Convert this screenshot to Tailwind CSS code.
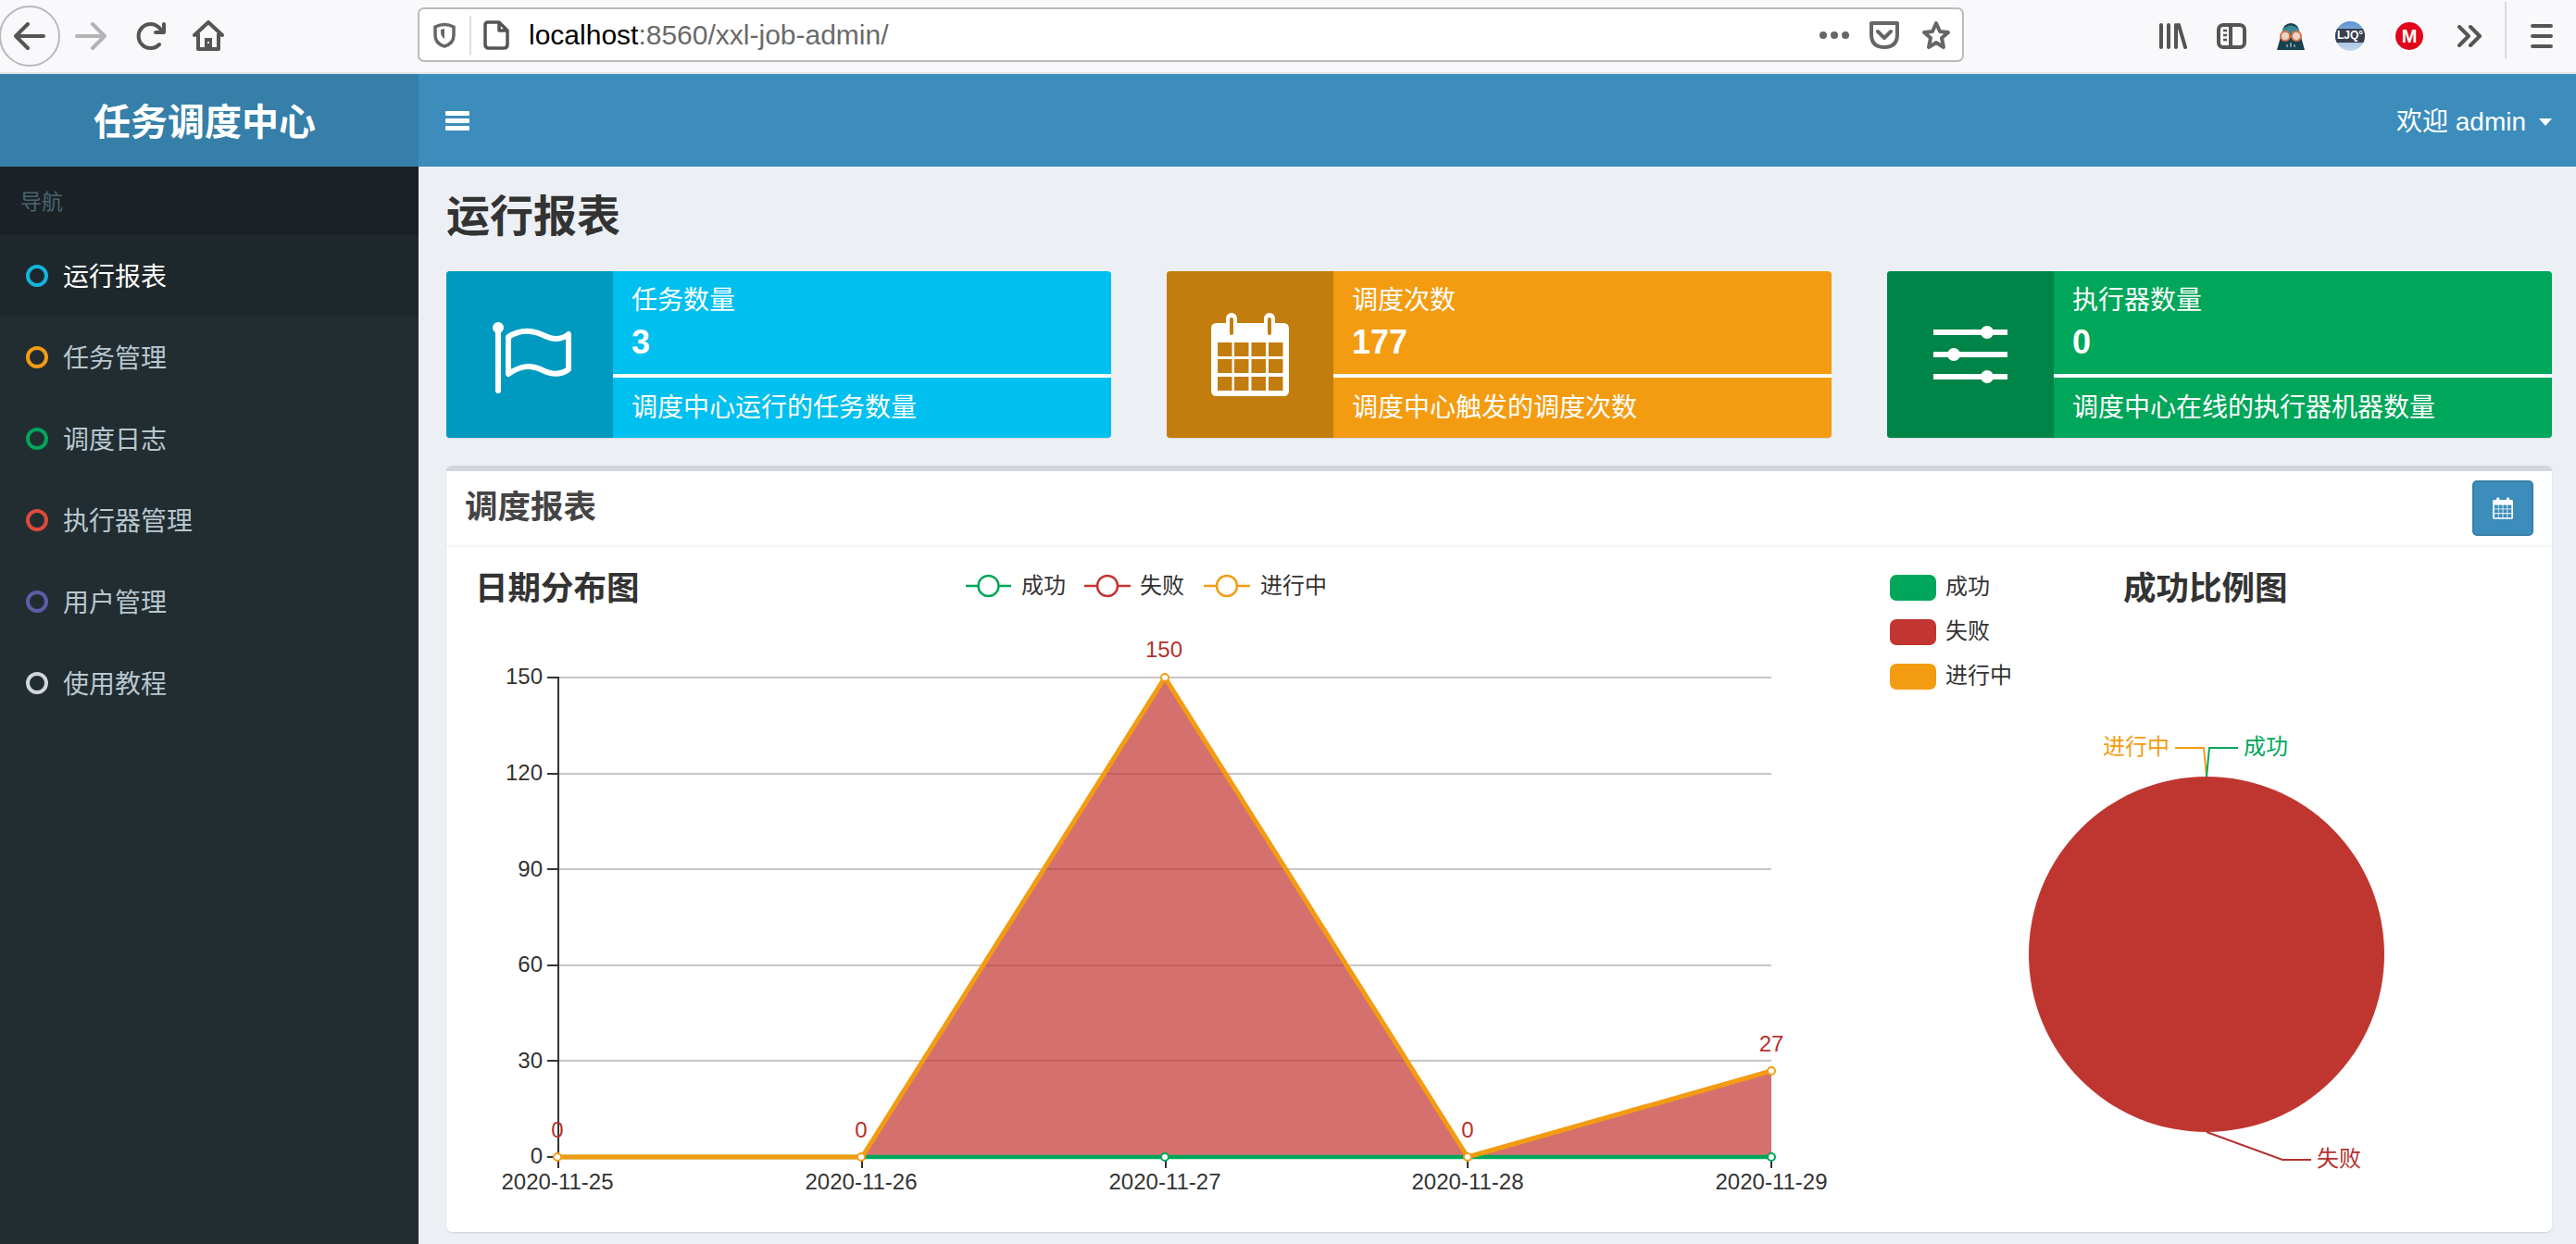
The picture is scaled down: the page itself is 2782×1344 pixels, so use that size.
<!DOCTYPE html>
<html lang="en">
<head>
  <meta charset="UTF-8">
  <title>任务调度中心</title>
  <script src="https://cdn.jsdelivr.net/npm/@tailwindcss/browser@4"></script>
</head>
<body class="h-screen w-screen overflow-hidden bg-[#ecf0f5] text-[#333] font-['Liberation_Sans','Noto_Sans_CJK_SC',sans-serif]">

  <!-- browser toolbar -->
  <div class="h-[80px] flex items-start bg-[#f9f9fb] border-b-2 border-[#e1e5e9]">
    <div class="h-[78px] w-[451px] shrink-0 flex items-center">
      <div class="ml-[-1px] w-[66px] h-[66px] shrink-0 rounded-full border-2 border-[#b9b9bb] flex items-center justify-center">
        <svg width="34" height="30" viewBox="0 0 34 30" fill="none" stroke="#555" stroke-width="4" stroke-linecap="round" stroke-linejoin="round"><path d="M2 15H32M15 2L2 15L15 28"/></svg>
      </div>
      <svg class="ml-[16px]" width="34" height="30" viewBox="0 0 34 30" fill="none" stroke="#b3b3b5" stroke-width="4" stroke-linecap="round" stroke-linejoin="round"><path d="M32 15H2M19 2L32 15L19 28"/></svg>
      <svg class="ml-[32px]" width="32" height="30" viewBox="0 0 32 30" fill="none" stroke="#555" stroke-width="4" stroke-linecap="round" stroke-linejoin="round"><path d="M25 24A13 13 0 1 1 25 6L29 11M30 2V11H21"/></svg>
      <svg class="ml-[29px]" width="34" height="34" viewBox="0 0 34 34" fill="none" stroke="#555" stroke-width="4" stroke-linejoin="round" stroke-linecap="round"><path d="M2 16L17 2L32 16M6 15V31H28V15"/><rect x="13" y="19" width="8" height="12" fill="#555" stroke="none"/><rect x="16" y="23" width="2" height="2" fill="#f9f9fb" stroke="none"/></svg>
    </div>

    <div class="mt-[8px] h-[59px] w-[1670px] shrink-0 flex items-center bg-white border-2 border-[#bbb] rounded-[7px]">
      <svg class="ml-[15px]" width="24" height="28" viewBox="0 0 24 28" fill="none" stroke="#666" stroke-width="3.5"><path d="M2 5Q12 0 22 5V14Q22 23 12 26Q2 23 2 14Z"/><path d="M8 8L12 7V18Q8 15 8 11Z" fill="#666" stroke="none"/></svg>
      <div class="ml-[15px] w-[2px] h-[42px] bg-[#dcdcdc]"></div>
      <svg class="ml-[13px]" width="28" height="32" viewBox="0 0 28 32" fill="none" stroke="#555" stroke-width="3.5" stroke-linejoin="round"><path d="M5 2H17L26 11V26Q26 30 22 30H6Q2 30 2 26V5Q2 2 5 2ZM17 2V11H26"/></svg>
      <div class="ml-[21px] text-[30px] leading-none"><span class="text-black">localhost</span><span class="text-[#6a6a6a]">:8560/xxl-job-admin/</span></div>
      <div class="ml-auto flex items-center">
        <svg width="32" height="8" viewBox="0 0 32 8" fill="#666"><circle cx="4" cy="4" r="4"/><circle cx="16" cy="4" r="4"/><circle cx="28" cy="4" r="4"/></svg>
        <svg class="ml-[22px]" width="32" height="30" viewBox="0 0 32 30" fill="none" stroke="#666" stroke-width="4" stroke-linecap="round" stroke-linejoin="round"><path d="M2 2H30V14Q30 28 16 28Q2 28 2 14Z"/><path d="M9 11L16 18L23 11"/></svg>
        <svg class="ml-[24px]" width="32" height="32" viewBox="0 0 32 32" fill="none" stroke="#666" stroke-width="4" stroke-linejoin="round"><path d="M16 3L20 12L29 13L22 19L24 29L16 24L8 29L10 19L3 13L12 12Z"/></svg>
        <div class="w-[12px]"></div>
      </div>
    </div>

    <div class="h-[78px] flex-1 flex items-center">
      <svg class="ml-[211px]" width="30" height="28" viewBox="0 0 30 28" fill="none" stroke="#555" stroke-width="4" stroke-linecap="round"><path d="M2 2V26M10 2V26M18 2V26M21 2L28 26"/></svg>
      <svg class="ml-[32px]" width="32" height="28" viewBox="0 0 32 28" fill="none" stroke="#555" stroke-width="4" stroke-linejoin="round"><rect x="2" y="2" width="28" height="24" rx="5"/><path d="M15 2V26"/><path d="M7 8H11M7 13H11M7 18H11" stroke-width="2.5"/></svg>
      <svg class="ml-[32px]" width="32" height="30" viewBox="0 0 32 30"><path d="M1 30L6 12Q8 1 16 1Q24 1 26 12L31 30Z" fill="#17424f"/><path d="M7 8Q16 -1 25 8V12H7Z" fill="#3a8a96"/><circle cx="10" cy="15" r="5" fill="#e8d5c8" stroke="#d9704a" stroke-width="2"/><circle cx="22" cy="15" r="5" fill="#e8d5c8" stroke="#d9704a" stroke-width="2"/><path d="M12 27V24M16 27V22M20 27V24" stroke="#9ab" stroke-width="1.5"/></svg>
      <div class="ml-[32px] w-[32px] h-[32px] rounded-full overflow-hidden flex flex-col bg-[linear-gradient(#5b93d3,#7fa9d8_30%,#c6d8ea)]">
        <div class="mt-[8px] h-[15px] bg-[#37404f] text-white text-[12px] leading-[15px] font-bold text-center">LJQ°</div>
      </div>
      <div class="ml-[33px] w-[30px] h-[30px] rounded-full bg-[#e0061b] text-white text-[20px] leading-[30px] font-bold text-center">M</div>
      <svg class="ml-[37px]" width="26" height="24" viewBox="0 0 26 24" fill="none" stroke="#555" stroke-width="4" stroke-linecap="round" stroke-linejoin="round"><path d="M2 2L12 12L2 22M14 2L24 12L14 22"/></svg>
      <div class="ml-[25px] w-[2px] h-[62px] mt-[-12px] bg-[#dcdcde]"></div>
      <svg class="ml-[26px]" width="24" height="26" viewBox="0 0 24 26" fill="none" stroke="#555" stroke-width="4" stroke-linecap="round"><path d="M2 2H22M2 13H22M2 24H22"/></svg>
    </div>
  </div>

  <div class="flex h-[1264px]">
    <!-- sidebar -->
    <aside class="w-[452px] shrink-0 bg-[#222d32] flex flex-col">
      <div class="h-[100px] pt-[3px] pr-[10px] bg-[#367fa9] flex items-center justify-center text-white text-[40px] font-bold">任务调度中心</div>
      <div class="h-[74px] bg-[#1a2226] pl-[22px] pt-[3px] flex items-center text-[23px] text-[#4b646f]">导航</div>
      <nav class="flex flex-col text-[28px] text-[#b8c7ce]">
        <a class="h-[88px] flex items-center pl-[28px] gap-[16px] bg-[#1e282c] text-white"><span class="w-[24px] h-[24px] rounded-full border-[4px] border-[#12b5dc]"></span><span class="pt-[4px]">运行报表</span></a>
        <a class="h-[88px] flex items-center pl-[28px] gap-[16px]"><span class="w-[24px] h-[24px] rounded-full border-[4px] border-[#f39c12]"></span><span class="pt-[4px]">任务管理</span></a>
        <a class="h-[88px] flex items-center pl-[28px] gap-[16px]"><span class="w-[24px] h-[24px] rounded-full border-[4px] border-[#00a65a]"></span><span class="pt-[4px]">调度日志</span></a>
        <a class="h-[88px] flex items-center pl-[28px] gap-[16px]"><span class="w-[24px] h-[24px] rounded-full border-[4px] border-[#dd4b39]"></span><span class="pt-[4px]">执行器管理</span></a>
        <a class="h-[88px] flex items-center pl-[28px] gap-[16px]"><span class="w-[24px] h-[24px] rounded-full border-[4px] border-[#605ca8]"></span><span class="pt-[4px]">用户管理</span></a>
        <a class="h-[88px] flex items-center pl-[28px] gap-[16px]"><span class="w-[24px] h-[24px] rounded-full border-[4px] border-[#d2d6de]"></span><span class="pt-[4px]">使用教程</span></a>
      </nav>
    </aside>

    <!-- main -->
    <main class="flex-1 min-w-0 flex flex-col">
      <header class="h-[100px] shrink-0 bg-[#3c8dbc] flex items-center pl-[29px] pr-[26px] text-white">
        <div class="w-[26px] flex flex-col gap-[3px]">
          <span class="h-[5px] bg-white rounded-[1px]"></span>
          <span class="h-[5px] bg-white rounded-[1px]"></span>
          <span class="h-[5px] bg-white rounded-[1px]"></span>
        </div>
        <div class="ml-auto pt-[3px] text-[28px] flex items-center">欢迎 admin<span class="ml-[14px] border-x-[7.5px] border-x-transparent border-t-[8px] border-t-white"></span></div>
      </header>

      <div class="pl-[30px] pr-[26px]">
        <h1 class="pt-[22px] h-[84px] text-[47px] leading-[64px] font-bold mb-[29px]">运行报表</h1>

        <div class="grid grid-cols-3 gap-x-[60px]">
          <div class="h-[180px] flex rounded-[4px] overflow-hidden bg-[#00c0ef] text-white shadow-[0_1px_1px_rgba(0,0,0,0.1)]">
            <div class="w-[180px] shrink-0 bg-[#009ac0] flex items-center justify-center">
              <svg class="ml-[-2px]" width="120" height="110" viewBox="510 325 120 110" fill="none" stroke="#fff" stroke-width="6" stroke-linecap="round" stroke-linejoin="round"><circle cx="537" cy="351" r="6" fill="#fff" stroke="none"/><path d="M537 355V419"/><path d="M548 361C565 350 580 356 590 361C600 365 608 362 613 358V396C605 402 595 402 585 397C570 390 560 393 548 401Z"/></svg>
            </div>
            <div class="flex-1 flex flex-col">
              <div class="h-[111px] pl-[20px] pt-[14px]">
                <div class="text-[28px] leading-[36px]">任务数量</div>
                <div class="mt-[5px] text-[36px] leading-[44px] font-bold">3</div>
              </div>
              <div class="h-[4px] bg-white"></div>
              <div class="flex-1 pl-[20px] flex items-center text-[28px]">调度中心运行的任务数量</div>
            </div>
          </div>

          <div class="h-[180px] flex rounded-[4px] overflow-hidden bg-[#f39c12] text-white shadow-[0_1px_1px_rgba(0,0,0,0.1)]">
            <div class="w-[180px] shrink-0 bg-[#c27d0e] flex items-center justify-center">
              <svg width="84" height="90" viewBox="1308 339 84 90"><path fill="#fff" d="M1314 350H1324V345A6 6 0 0 1 1336 345V350H1365V345A6 6 0 0 1 1377 345V350H1386Q1392 350 1392 356V423Q1392 429 1386 429H1314Q1308 429 1308 423V356Q1308 350 1314 350Z"/><g fill="#c27d0e"><rect x="1328" y="344" width="4" height="19" rx="2"/><rect x="1369" y="344" width="4" height="19" rx="2"/><rect x="1315" y="371" width="15.5" height="15"/><rect x="1333" y="371" width="15.5" height="15"/><rect x="1351.500" y="371" width="15.5" height="15"/><rect x="1370" y="371" width="15.5" height="15"/><rect x="1315" y="389" width="15.5" height="15"/><rect x="1333" y="389" width="15.5" height="15"/><rect x="1351.500" y="389" width="15.5" height="15"/><rect x="1370" y="389" width="15.5" height="15"/><rect x="1315" y="408" width="15.5" height="15"/><rect x="1333" y="408" width="15.5" height="15"/><rect x="1351.500" y="408" width="15.5" height="15"/><rect x="1370" y="408" width="15.5" height="15"/></g></svg>
            </div>
            <div class="flex-1 flex flex-col">
              <div class="h-[111px] pl-[20px] pt-[14px]">
                <div class="text-[28px] leading-[36px]">调度次数</div>
                <div class="mt-[5px] text-[36px] leading-[44px] font-bold">177</div>
              </div>
              <div class="h-[4px] bg-white"></div>
              <div class="flex-1 pl-[20px] flex items-center text-[28px]">调度中心触发的调度次数</div>
            </div>
          </div>

          <div class="h-[180px] flex rounded-[4px] overflow-hidden bg-[#00a65a] text-white shadow-[0_1px_1px_rgba(0,0,0,0.1)]">
            <div class="w-[180px] shrink-0 bg-[#008548] flex items-center justify-center">
              <svg width="80" height="62" viewBox="2088 351 80 62" fill="#fff"><rect x="2088" y="355" width="80" height="6"/><rect x="2088" y="379" width="80" height="6"/><rect x="2088" y="403" width="80" height="6"/><circle cx="2146" cy="358" r="7"/><circle cx="2110" cy="382" r="7"/><circle cx="2146" cy="406" r="7"/></svg>
            </div>
            <div class="flex-1 flex flex-col">
              <div class="h-[111px] pl-[20px] pt-[14px]">
                <div class="text-[28px] leading-[36px]">执行器数量</div>
                <div class="mt-[5px] text-[36px] leading-[44px] font-bold">0</div>
              </div>
              <div class="h-[4px] bg-white"></div>
              <div class="flex-1 pl-[20px] flex items-center text-[28px]">调度中心在线的执行器机器数量</div>
            </div>
          </div>
        </div>

        <!-- report box -->
        <section class="mt-[30px] h-[828px] bg-white rounded-[6px] border-t-[6px] border-[#d2d6de] shadow-[0_1px_2px_rgba(0,0,0,0.12)] flex flex-col">
          <div class="h-[82px] shrink-0 border-b-2 border-[#f4f4f4] flex items-start justify-between pl-[20px] pr-[20px]">
            <h3 class="text-[35.500px] leading-[78px] font-bold text-[#444]">调度报表</h3>
            <button class="mt-[10px] w-[66px] h-[60px] bg-[#3c8dbc] border-2 border-[#367fa9] rounded-[5px] flex items-center justify-center">
              <svg width="22" height="24" viewBox="1308 339 84 90"><path fill="#fff" d="M1314 350H1324V345A6 6 0 0 1 1336 345V350H1365V345A6 6 0 0 1 1377 345V350H1386Q1392 350 1392 356V423Q1392 429 1386 429H1314Q1308 429 1308 423V356Q1308 350 1314 350Z"/><g fill="#3c8dbc"><rect x="1315" y="371" width="15.5" height="15"/><rect x="1333" y="371" width="15.5" height="15"/><rect x="1351.500" y="371" width="15.5" height="15"/><rect x="1370" y="371" width="15.5" height="15"/><rect x="1315" y="389" width="15.5" height="15"/><rect x="1333" y="389" width="15.5" height="15"/><rect x="1351.500" y="389" width="15.5" height="15"/><rect x="1370" y="389" width="15.5" height="15"/><rect x="1315" y="408" width="15.5" height="15"/><rect x="1333" y="408" width="15.5" height="15"/><rect x="1351.500" y="408" width="15.5" height="15"/><rect x="1370" y="408" width="15.5" height="15"/></g></svg>
            </button>
          </div>

          <div class="flex-1 flex min-h-0">
            <!-- line chart, drawn in page coordinates -->
            <svg width="1538" height="740" viewBox="482 591 1538 740" font-size="24" fill="#333" class="shrink-0">
              <text x="513" y="636" font-size="35.500" font-weight="700" dominant-baseline="central">日期分布图</text>

              <g fill="none" stroke-width="2.500">
                <path d="M1043 633H1092" stroke="#00a65a"/><circle cx="1067.500" cy="633" r="11" fill="#fff" stroke="#00a65a"/>
                <path d="M1171 633H1221" stroke="#c23531"/><circle cx="1196" cy="633" r="11" fill="#fff" stroke="#c23531"/>
                <path d="M1300 633H1350" stroke="#f39c12"/><circle cx="1325" cy="633" r="11" fill="#fff" stroke="#f39c12"/>
              </g>
              <text x="1103" y="632" dominant-baseline="central">成功</text>
              <text x="1231" y="632" dominant-baseline="central">失败</text>
              <text x="1361" y="632" dominant-baseline="central">进行中</text>

              <path d="M603 732H1913M603 836H1913M603 939H1913M603 1043H1913M603 1146H1913" stroke="#c6c6c6" stroke-width="2" fill="none"/>
              <path d="M603 731V1262M591 732H603M591 836H603M591 939H603M591 1043H603M591 1146H603M591 1250H603M931 1250V1262M1259 1250V1262M1585 1250V1262M1913 1250V1262" stroke="#333" stroke-width="2" fill="none"/>

              <g text-anchor="end" dominant-baseline="central">
                <text x="586" y="730">150</text>
                <text x="586" y="834">120</text>
                <text x="586" y="938">90</text>
                <text x="586" y="1041">60</text>
                <text x="586" y="1145">30</text>
                <text x="586" y="1248">0</text>
              </g>
              <g text-anchor="middle" dominant-baseline="central">
                <text x="602" y="1276">2020-11-25</text>
                <text x="930" y="1276">2020-11-26</text>
                <text x="1258" y="1276">2020-11-27</text>
                <text x="1585" y="1276">2020-11-28</text>
                <text x="1913" y="1276">2020-11-29</text>
              </g>

              <path d="M931 1250L1258 732L1585 1250L1913 1157V1250Z" fill="#c23531" fill-opacity="0.7"/>
              <path d="M603 1250H1913" stroke="#00a65a" stroke-width="4.500" fill="none"/>
              <circle cx="1258" cy="1250" r="4" fill="#fff" stroke="#00a65a" stroke-width="2"/>
              <circle cx="1913" cy="1250" r="4" fill="#fff" stroke="#00a65a" stroke-width="2"/>
              <path d="M603 1250H931L1258 732L1585 1250L1913 1157" stroke="#f39c12" stroke-width="5" fill="none" stroke-linejoin="round"/>
              <g fill="#fff" stroke="#f39c12" stroke-width="2">
                <circle cx="602" cy="1250" r="4"/><circle cx="930" cy="1250" r="4"/><circle cx="1258" cy="732" r="4"/><circle cx="1585" cy="1250" r="4"/><circle cx="1913" cy="1157" r="4"/>
              </g>
              <g text-anchor="middle" dominant-baseline="central" fill="#b5322f">
                <text x="602" y="1220">0</text>
                <text x="930" y="1220">0</text>
                <text x="1257" y="701">150</text>
                <text x="1585" y="1220">0</text>
                <text x="1913" y="1127">27</text>
              </g>
            </svg>

            <!-- pie chart, drawn in page coordinates -->
            <svg width="737" height="740" viewBox="2020 591 737 740" font-size="24" fill="#333" class="shrink-0">
              <rect x="2041" y="621" width="50" height="28" rx="7" fill="#00a65a"/>
              <rect x="2041" y="669" width="50" height="28" rx="7" fill="#c23531"/>
              <rect x="2041" y="717" width="50" height="28" rx="7" fill="#f39c12"/>
              <text x="2101" y="633" dominant-baseline="central">成功</text>
              <text x="2101" y="681" dominant-baseline="central">失败</text>
              <text x="2101" y="729" dominant-baseline="central">进行中</text>
              <text x="2293" y="636" font-size="35.500" font-weight="700" dominant-baseline="central">成功比例图</text>

              <circle cx="2383" cy="1031" r="192" fill="#bf3630"/>
              <path d="M2349 808H2380L2383 839" stroke="#f39c12" stroke-width="2" fill="none"/>
              <path d="M2417 808H2386L2383 839" stroke="#00a65a" stroke-width="2" fill="none"/>
              <path d="M2383 1223L2465 1253H2496" stroke="#b5322f" stroke-width="2" fill="none"/>
              <text x="2271" y="806" fill="#f39c12" dominant-baseline="central">进行中</text>
              <text x="2423" y="806" fill="#00a65a" dominant-baseline="central">成功</text>
              <text x="2502" y="1251" fill="#b5322f" dominant-baseline="central">失败</text>
            </svg>
          </div>
        </section>
      </div>
    </main>
  </div>
</body>
</html>
